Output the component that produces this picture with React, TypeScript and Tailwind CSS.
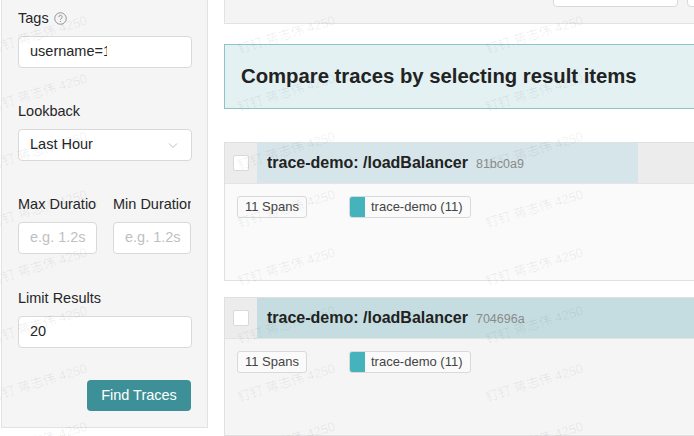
import type { FC } from 'react';

const font = { fontFamily: '"Liberation Sans", Arial, "Noto Sans CJK SC", sans-serif' };

interface Trace {
  name: string;
  id: string;
  barPct: number;
  barBg: string;
  bodyBg: string;
}

const traces: Trace[] = [
  { name: 'trace-demo: /loadBalancer', id: '81bc0a9', barPct: 78.4, barBg: 'bg-[#d5e5e9]', bodyBg: 'bg-[#fafafa]' },
  { name: 'trace-demo: /loadBalancer', id: '704696a', barPct: 100, barBg: 'bg-[#c5dde1]', bodyBg: 'bg-[#f5f5f5]' },
];

const Label: FC<{ text: string; help?: boolean }> = ({ text, help }) => (
  <div className="h-[22px] mb-2 pt-[3px] flex items-center gap-[5px] text-[14.5px] text-[#262626] whitespace-nowrap overflow-hidden">
    <span>{text}</span>
    {help && (
      <svg width="13" height="13" viewBox="0 0 14 14" className="text-[#8c8c8c]">
        <circle cx="7" cy="7" r="6.2" fill="none" stroke="currentColor" strokeWidth="1" />
        <path d="M5.2 5.5a1.8 1.8 0 1 1 2.5 1.6c-.5.2-.7.6-.7 1.1v.4" fill="none" stroke="currentColor" strokeWidth="1" />
        <circle cx="7" cy="10.3" r=".6" fill="currentColor" />
      </svg>
    )}
  </div>
);

const Field: FC<{ children?: React.ReactNode; className?: string }> = ({ children, className = '' }) => (
  <div className={`h-8 bg-white border border-[#d9d9d9] rounded-[4px] flex items-center pl-[11px] pr-2 text-[14.5px] text-[#262626] overflow-hidden whitespace-nowrap ${className}`}>
    {children}
  </div>
);

const Watermarks: FC = () => {
  const rows = [48, 106, 164, 222, 280, 338, 396, 454];
  const cols = [-10, 238, 486];
  return (
    <div className="absolute inset-0 pointer-events-none overflow-hidden">
      {rows.map((y) =>
        cols.map((x) => (
          <span
            key={`${x}-${y}`}
            className="absolute text-[13px] text-black/[0.07] whitespace-nowrap -rotate-[17deg] origin-left"
            style={{ left: x, top: y - 8 }}
          >
            钉钉 蒋志伟 4250
          </span>
        ))
      )}
    </div>
  );
};

const TraceCard: FC<{ t: Trace; className?: string }> = ({ t, className = '' }) => (
  <div className={`border border-[#e0e0e0] ${className}`}>
    <div className="h-[41px] flex bg-[#ececec] border-b border-[#e4e4e4]">
      <div className="w-[32px] flex items-center pl-2">
        <div className="w-4 h-4 bg-white border border-[#d9d9d9] rounded-[2px]" />
      </div>
      <div className="flex-1 relative flex items-center">
        <div className={`absolute inset-y-0 left-0 ${t.barBg}`} style={{ width: `${t.barPct}%` }} />
        <div className="relative pl-[10px] flex items-baseline gap-2 whitespace-nowrap">
          <span className="text-[16px] font-bold text-[#222]">{t.name}</span>
          <span className="text-[12.5px] text-[#8a8a8a]">{t.id}</span>
        </div>
      </div>
    </div>
    <div className={`h-[96px] ${t.bodyBg} pt-[12px] pl-3`}>
      <div className="flex gap-[42px]">
        <div className="h-[22px] px-[7px] flex items-center bg-[#fafafa] border border-[#d9d9d9] rounded-[3px] text-[13px] text-[#444]">
          11 Spans
        </div>
        <div className="h-[22px] flex items-center bg-[#fafafa] border border-[#d9d9d9] rounded-[3px] text-[13px] text-[#444] overflow-hidden">
          <div className="w-[15px] h-full bg-[#44b3bb]" />
          <span className="pl-[6px] pr-[8px]">trace-demo (11)</span>
        </div>
      </div>
    </div>
  </div>
);

const App: FC = () => {
  return (
    <div className="relative w-[694px] h-[436px] overflow-hidden bg-white flex pl-px" style={font}>
      {/* Search form */}
      <div className="w-[207px] h-[428px] shrink-0 bg-[#f5f5f5] border-x border-b border-[#e2e2e2] pt-[6px] pl-[16px] pr-[15px]">
        <Label text="Tags" help />
        <Field className="mb-[31px]">
          <span className="block w-[77px] overflow-hidden">username=1234</span>
        </Field>

        <Label text="Lookback" />
        <Field className="mb-[31px] justify-between">
          <span>Last Hour</span>
          <svg width="12" height="12" viewBox="0 0 12 12" className="mr-1">
            <path d="M2 4.5l4 4 4-4" fill="none" stroke="#bfbfbf" strokeWidth="1" />
          </svg>
        </Field>

        <div className="flex gap-4 mb-[32px]">
          <div className="w-[79px]">
            <Label text="Max Duration" />
            <Field className="text-[#bfbfbf]">e.g. 1.2s</Field>
          </div>
          <div className="w-[78px]">
            <Label text="Min Duration" />
            <Field className="text-[#bfbfbf]">e.g. 1.2s</Field>
          </div>
        </div>

        <Label text="Limit Results" />
        <Field className="mb-[32px]">20</Field>

        <div className="flex justify-end">
          <button className="h-[31px] w-[104px] mr-px rounded-[4px] bg-[#3d9097] text-white text-[14.5px]">Find Traces</button>
        </div>
      </div>

      {/* Results */}
      <div className="ml-4 w-[520px] shrink-0">
        <div className="h-6 bg-[#f4f4f4] border-l border-b border-[#e2e2e2] flex pl-[328px] gap-[9px] overflow-hidden">
          <div className="w-[125px] h-8 -mt-[25px] shrink-0 bg-white border border-[#d9d9d9] rounded-[4px]" />
          <div className="w-[60px] h-8 -mt-[25px] shrink-0 bg-white border border-[#d9d9d9] rounded-[4px]" />
        </div>

        <div className="mt-5 h-[65px] bg-[#e3f1f2] border border-[#8ec4c8] flex items-center pl-4">
          <span className="text-[20.3px] font-bold text-[#222] whitespace-nowrap">Compare traces by selecting result items</span>
        </div>

        <TraceCard t={traces[0]} className="mt-[33px]" />
        <TraceCard t={traces[1]} className="mt-4" />
      </div>

      <Watermarks />
    </div>
  );
};

export default App;
